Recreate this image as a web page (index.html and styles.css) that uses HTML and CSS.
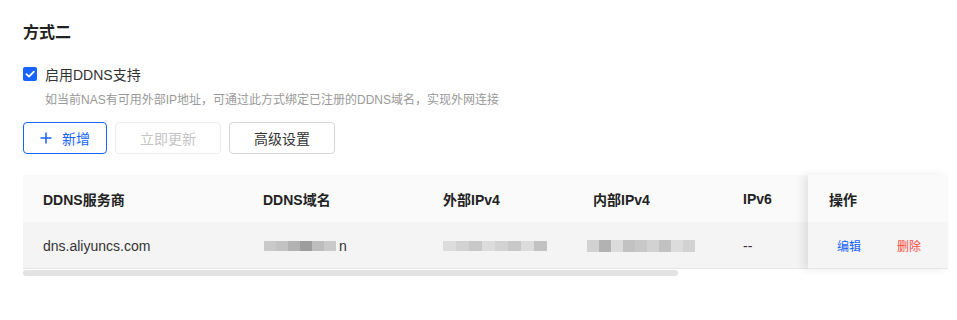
FILE: index.html
```html
<!DOCTYPE html>
<html lang="zh-CN">
<head>
<meta charset="utf-8">
<title>方式二</title>
<link rel="stylesheet" href="styles.css">
</head>
<body>
<div class="page">
  <h2 class="title">方式二</h2>
  <label class="check-row">
    <span class="checkbox">
      <svg width="14" height="14" viewBox="0 0 14 14"><path d="M3.4 7.1 L6 9.6 L10.8 4.6" fill="none" stroke="#fff" stroke-width="1.8" stroke-linecap="round" stroke-linejoin="round"/></svg>
    </span>
    <span class="check-label">启用DDNS支持</span>
  </label>
  <p class="desc">如当前NAS有可用外部IP地址，可通过此方式绑定已注册的DDNS域名，实现外网连接</p>
  <div class="actions">
    <button class="btn btn-primary">
      <svg width="12" height="12" viewBox="0 0 12 12"><path d="M6 0.5 V11.5 M0.5 6 H11.5" stroke="currentColor" stroke-width="1.5" fill="none"/></svg>
      <span>新增</span>
    </button>
    <button class="btn btn-disabled">立即更新</button>
    <button class="btn">高级设置</button>
  </div>

  <div class="table">
    <div class="scroll">
      <div class="row head">
        <div class="cell c1">DDNS服务商</div>
        <div class="cell c2">DDNS域名</div>
        <div class="cell c3">外部IPv4</div>
        <div class="cell c4">内部IPv4</div>
        <div class="cell c5">IPv6</div>
      </div>
      <div class="row body">
        <div class="cell c1">dns.aliyuncs.com</div>
        <div class="cell c2">
          <span class="mosaic">
            <i class="m1"></i><i class="m2"></i><i class="m3"></i><i class="m4"></i><i class="m5"></i><i class="m1"></i>
          </span><span class="tail">n</span>
        </div>
        <div class="cell c3">
          <span class="mosaic light">
            <i class="m6"></i><i class="m7"></i><i class="m8"></i><i class="m6"></i><i class="m7"></i><i class="m8"></i><i class="m6"></i><i class="m2"></i>
          </span>
        </div>
        <div class="cell c4">
          <span class="mosaic">
            <i class="m7"></i><i class="m3"></i><i class="m6"></i><i class="m2"></i><i class="m8"></i><i class="m7"></i><i class="m2"></i><i class="m6"></i><i class="m7"></i>
          </span>
        </div>
        <div class="cell c5">--</div>
      </div>
    </div>
    <div class="fixed">
      <div class="fcell head">操作</div>
      <div class="fcell body">
        <a class="link link-edit">编辑</a>
        <a class="link link-del">删除</a>
      </div>
    </div>
  </div>
  <div class="scrollbar"><div class="thumb"></div></div>
</div>
</body>
</html>
```

FILE: styles.css
```css
* { box-sizing: border-box; }
html, body { margin: 0; padding: 0; background: #fff; }
body {
  font-family: "Liberation Sans", "Noto Sans CJK SC", sans-serif;
  color: #333;
  width: 957px;
  height: 320px;
  overflow: hidden;
}
.page {
  padding: 21px 9px 0 23px;
}
.title {
  margin: 0;
  font-size: 16px;
  line-height: 24px;
  font-weight: bold;
  color: #222;
}
.check-row {
  margin-top: 18px;
  display: flex;
  align-items: center;
  height: 22px;
  gap: 8px;
}
.checkbox {
  width: 14px;
  height: 14px;
  border-radius: 2px;
  background: #1763ff;
  display: flex;
}
.check-label {
  font-size: 14px;
  color: #333;
}
.desc {
  margin: 6px 0 0 22px;
  font-size: 12px;
  line-height: 18px;
  color: #999;
}
.actions {
  margin-top: 13px;
  display: flex;
  gap: 8px;
}
.btn {
  height: 32px;
  width: 106px;
  border: 1px solid #d6d6d6;
  border-radius: 4px;
  background: #fff;
  font-family: inherit;
  font-size: 14px;
  color: #333;
  display: flex;
  align-items: center;
  justify-content: center;
  gap: 10px;
  padding: 0;
}
.btn-primary {
  width: 84px;
  border-color: #1763ff;
  color: #1763ff;
}
.btn-disabled {
  width: 106px;
  border-color: #ececec;
  color: #c4c4c4;
}
.table {
  margin-top: 21px;
  display: flex;
  width: 925px;
}
.scroll {
  width: 785px;
  overflow: hidden;
}
.row {
  display: flex;
  white-space: nowrap;
}
.row.head {
  height: 47px;
  background: #fafafa;
  font-weight: bold;
  font-size: 14px;
  color: #222;
}
.row.body {
  height: 47px;
  background: #f4f4f4;
  border-bottom: 1px solid #e6e6e6;
  font-size: 14px;
  color: #333;
}
.cell {
  flex: none;
  padding-left: 20px;
  display: flex;
  align-items: center;
}
.row.body .cell { padding-top: 1px; }
.c1 { width: 220px; }
.c2 { width: 180px; }
.c3 { width: 150px; }
.c4 { width: 150px; }
.c5 { width: 150px; }
.mosaic {
  display: flex;
  height: 10px;
}
.mosaic i {
  width: 12px;
  height: 10px;
  display: block;
}
.c2 .mosaic { margin-left: 1px; }
.c4 .mosaic { margin-left: -6px; height: 12px; }
.c4 .mosaic i { height: 12px; }
.mosaic.light i { width: 13px; }
.m1 { background: #c9c9c9; }
.m2 { background: #c2c2c2; }
.m3 { background: #b2b2b2; }
.m4 { background: #9d9d9d; }
.m5 { background: #bdbdbd; }
.m6 { background: #dcdcdc; }
.m7 { background: #d2d2d2; }
.m8 { background: #c8c8c8; }
.tail { margin-left: 3px; font-size: 14px; }
.fixed {
  width: 140px;
  position: relative;
  box-shadow: -5px 0 8px rgba(0, 0, 0, 0.09);
}
.fcell {
  display: flex;
  align-items: center;
  height: 47px;
}
.fcell.head {
  background: #fafafa;
  padding-left: 21px;
  font-size: 14px;
  font-weight: bold;
  color: #222;
}
.fcell.body {
  background: #f5f5f5;
  border-bottom: 1px solid #e6e6e6;
  padding-left: 21px;
  padding-top: 1px;
  gap: 20px;
}
.link {
  font-size: 12px;
  padding: 0 8px;
  cursor: pointer;
}
.link-edit { color: #1763ff; }
.link-del { color: #f5493d; }
.scrollbar {
  width: 925px;
  height: 6px;
  margin-top: 1px;
}
.thumb {
  width: 655px;
  height: 6px;
  border-radius: 3px;
  background: #e3e3e3;
}
```
